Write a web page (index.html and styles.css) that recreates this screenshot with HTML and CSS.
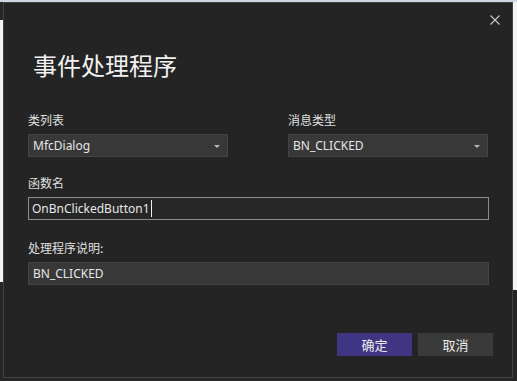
FILE: index.html
```html
<!DOCTYPE html>
<html>
<head>
  <title>事件处理程序</title>
  <link rel="stylesheet" href="styles.css">
</head>
<body>
  <div class="dialog">
    <div class="titlebar">
      <button class="close" title="关闭">
        <svg width="10" height="10" viewBox="0 0 10 10"><path d="M0.5 0.5L9.5 9.5M9.5 0.5L0.5 9.5" stroke="#c8c8c8" stroke-width="1.1"/></svg>
      </button>
    </div>
    <h1 class="title">事件处理程序</h1>
    <div class="row">
      <div class="field half">
        <label class="label">类列表</label>
        <div class="combo">
          <span>MfcDialog</span>
          <svg class="arrow" width="6" height="3" viewBox="0 0 6 3"><path d="M0 0H6L3 3Z" fill="#b8b8b8"/></svg>
        </div>
      </div>
      <div class="field half">
        <label class="label">消息类型</label>
        <div class="combo">
          <span>BN_CLICKED</span>
          <svg class="arrow" width="6" height="3" viewBox="0 0 6 3"><path d="M0 0H6L3 3Z" fill="#b8b8b8"/></svg>
        </div>
      </div>
    </div>
    <div class="field">
      <label class="label">函数名</label>
      <div class="textbox"><span>OnBnClickedButton1</span><span class="caret"></span></div>
    </div>
    <div class="field">
      <label class="label">处理程序说明:</label>
      <div class="readonly">BN_CLICKED</div>
    </div>
    <div class="footer">
      <button class="btn primary">确定</button>
      <button class="btn">取消</button>
    </div>
  </div>
</body>
</html>
```

FILE: styles.css
```css
html, body {
  margin: 0;
  height: 100%;
}
body {
  padding: 2px 5px 0 3px;
  box-sizing: border-box;
  background:
    linear-gradient(#cfd8e3, #cfd8e3) left top / 100% 2px no-repeat,
    linear-gradient(#f4f4f4, #f4f4f4) right top / 5px 290px no-repeat,
    linear-gradient(#f4f4f4, #f4f4f4) left 20px / 3px 262px no-repeat,
    #262626;
  font-family: "Noto Sans", "Noto Sans CJK SC", sans-serif;
  color: #e2e2e2;
  overflow: hidden;
}
.dialog {
  width: 510px;
  height: 376px;
  box-sizing: border-box;
  background: #242424;
  border: 1px solid #424242;
  padding: 0 23px 0 24px;
}
.titlebar {
  display: flex;
  justify-content: flex-end;
  height: 46px;
  margin-right: -23px;
}
.close {
  width: 34px;
  height: 34px;
  padding: 0;
  border: none;
  background: none;
  display: flex;
  align-items: center;
  justify-content: center;
}
.title {
  margin: 0 0 0 5px;
  font-family: "Noto Sans CJK SC", sans-serif;
  font-weight: normal;
  font-size: 24px;
  line-height: 32px;
  color: #f2f2f2;
  height: 62px;
}
.row {
  display: flex;
  gap: 60px;
}
.half {
  width: 200px;
}
.field {
  margin-bottom: 4px;
}
.label {
  display: block;
  font-family: "Noto Sans CJK SC", sans-serif;
  font-size: 12px;
  line-height: 16px;
  height: 23px;
  padding-top: 1px;
  box-sizing: border-box;
  color: #e0e0e0;
}
.combo, .textbox, .readonly {
  height: 23px;
  box-sizing: border-box;
  display: flex;
  align-items: center;
  font-size: 12px;
  padding: 0 4px;
  color: #e6e6e6;
}
.combo {
  background: #383838;
  border: 1px solid #434343;
  justify-content: space-between;
  margin-bottom: 13px;
}
.arrow {
  margin-right: 3px;
  margin-top: 1px;
}
.textbox {
  background: #262626;
  border: 1px solid #8c8c8c;
  padding-left: 3px;
  margin-bottom: 19px;
}
.caret {
  display: inline-block;
  width: 1px;
  height: 17px;
  background: #f0f0f0;
  margin-left: 1px;
}
.readonly {
  background: #383838;
  border: 1px solid #434343;
}
.footer {
  display: flex;
  justify-content: flex-end;
  gap: 6px;
  margin-top: 48px;
  margin-right: -4px;
}
.btn {
  width: 75px;
  height: 23px;
  border: none;
  background: #3a3a3a;
  color: #ececec;
  font-family: "Noto Sans CJK SC", sans-serif;
  font-size: 13px;
  padding: 0;
}
.btn.primary {
  background: #3f3582;
}
```
